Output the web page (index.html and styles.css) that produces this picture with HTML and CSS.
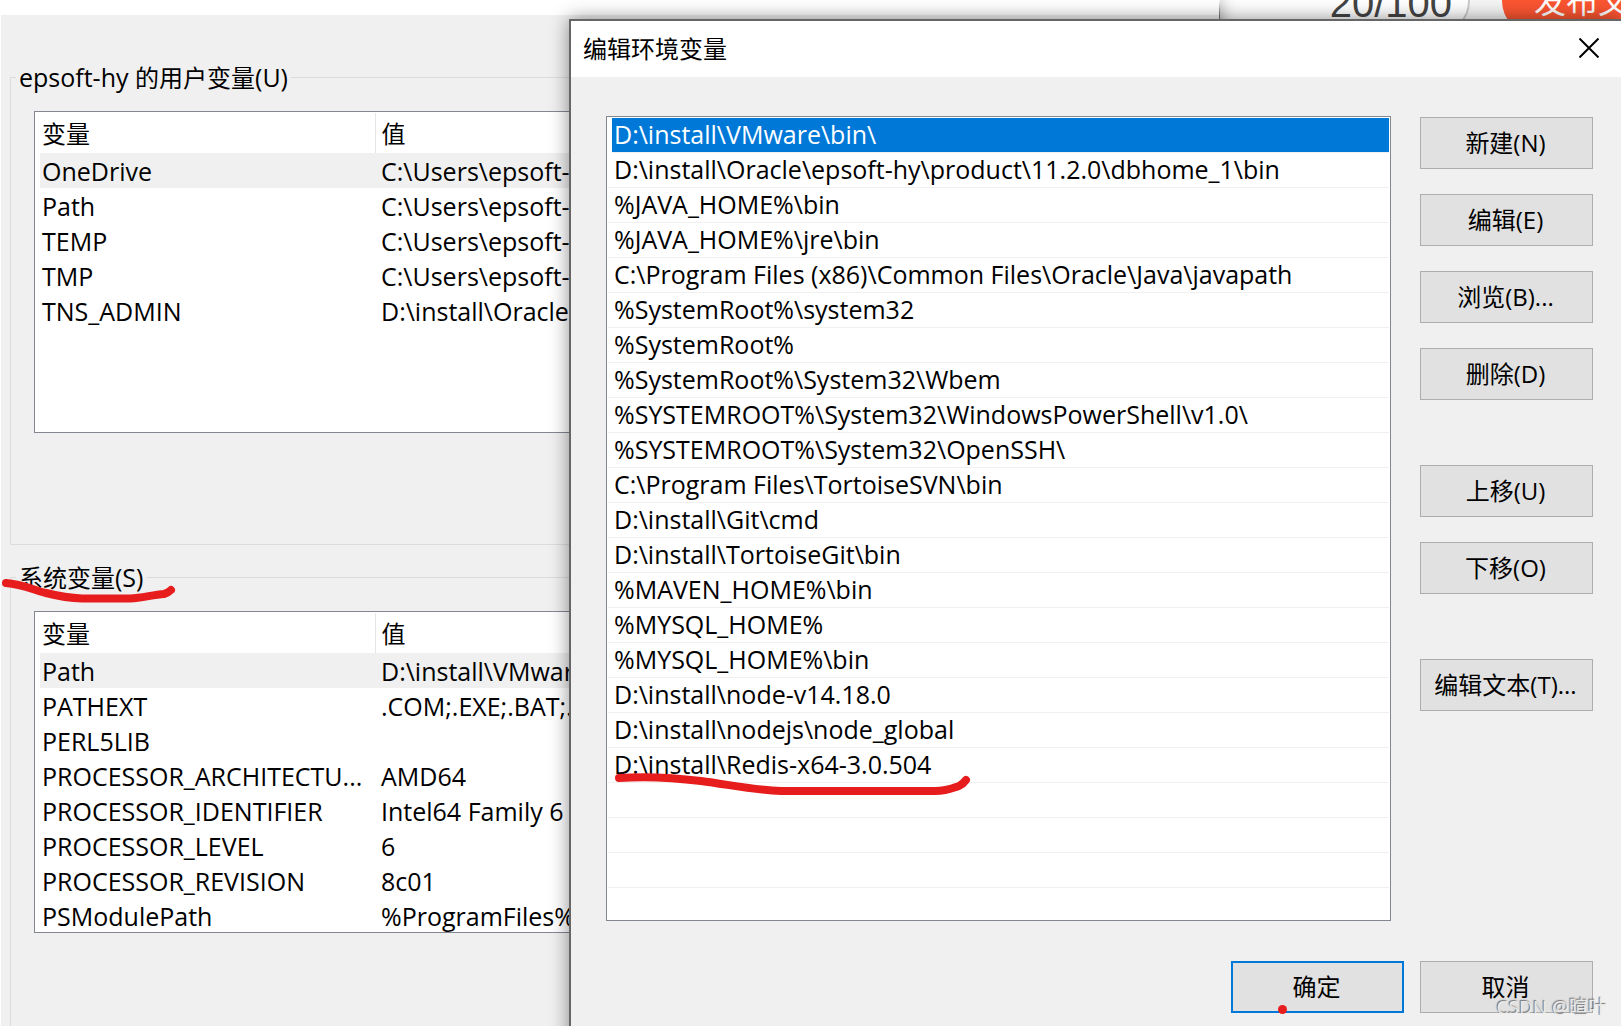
FILE: index.html
```html
<!DOCTYPE html>
<html lang="zh-CN">
<head>
<meta charset="utf-8">
<title>编辑环境变量</title>
<link rel="stylesheet" href="styles.css">
</head>
<body>
<div class="desktop">
  <header class="editor-bar">
    <span class="title-count">20/100</span>
    <button class="publish" type="button">发布文章</button>
  </header>

  <main class="window env-window">
    <fieldset class="group">
      <legend><span class="latin">epsoft-hy </span>的用户变量<span class="latin">(U)</span></legend>
      <div class="var-list">
        <table>
          <thead><tr><th class="name">变量</th><th>值</th></tr></thead>
          <tbody>
            <tr class="current"><td>OneDrive</td><td>C:\Users\epsoft-h</td></tr>
            <tr><td>Path</td><td>C:\Users\epsoft-h</td></tr>
            <tr><td>TEMP</td><td>C:\Users\epsoft-h</td></tr>
            <tr><td>TMP</td><td>C:\Users\epsoft-h</td></tr>
            <tr><td>TNS_ADMIN</td><td>D:\install\Oracle\</td></tr>
          </tbody>
        </table>
      </div>
    </fieldset>
    <fieldset class="group">
      <legend>系统变量<span class="latin">(S)</span></legend>
      <div class="var-list">
        <table>
          <thead><tr><th class="name">变量</th><th>值</th></tr></thead>
          <tbody>
            <tr class="current"><td>Path</td><td>D:\install\VMware</td></tr>
            <tr><td>PATHEXT</td><td>.COM;.EXE;.BAT;.C</td></tr>
            <tr><td>PERL5LIB</td><td></td></tr>
            <tr><td>PROCESSOR_ARCHITECTU...</td><td>AMD64</td></tr>
            <tr><td>PROCESSOR_IDENTIFIER</td><td>Intel64 Family 6 M</td></tr>
            <tr><td>PROCESSOR_LEVEL</td><td>6</td></tr>
            <tr><td>PROCESSOR_REVISION</td><td>8c01</td></tr>
            <tr><td>PSModulePath</td><td>%ProgramFiles%</td></tr>
          </tbody>
        </table>
      </div>
    </fieldset>
    <svg class="mark mark-group" width="180" height="34" viewBox="0 0 180 34" aria-hidden="true"><path d="M5 10C21 11 33 17 45 20C57 23 67 25 81 25.500H129C141 25 151 22 163 21Q167 20 170 17"/></svg>
  </main>

  <section class="window dialog" role="dialog" aria-labelledby="dialog-title">
    <header class="title-bar">
      <h1 id="dialog-title">编辑环境变量</h1>
      <button class="close" type="button" aria-label="关闭"><svg width="20" height="20" viewBox="0 0 20 20"><path d="M0.500 0.500L19.500 19.500M19.500 0.500L0.500 19.500"/></svg></button>
    </header>
    <div class="dialog-body">
      <ul class="path-list">
        <li class="selected">D:\install\VMware\bin\</li>
        <li>D:\install\Oracle\epsoft-hy\product\11.2.0\dbhome_1\bin</li>
        <li>%JAVA_HOME%\bin</li>
        <li>%JAVA_HOME%\jre\bin</li>
        <li>C:\Program Files (x86)\Common Files\Oracle\Java\javapath</li>
        <li>%SystemRoot%\system32</li>
        <li>%SystemRoot%</li>
        <li>%SystemRoot%\System32\Wbem</li>
        <li>%SYSTEMROOT%\System32\WindowsPowerShell\v1.0\</li>
        <li>%SYSTEMROOT%\System32\OpenSSH\</li>
        <li>C:\Program Files\TortoiseSVN\bin</li>
        <li>D:\install\Git\cmd</li>
        <li>D:\install\TortoiseGit\bin</li>
        <li>%MAVEN_HOME%\bin</li>
        <li>%MYSQL_HOME%</li>
        <li>%MYSQL_HOME%\bin</li>
        <li>D:\install\node-v14.18.0</li>
        <li>D:\install\nodejs\node_global</li>
        <li class="marked">D:\install\Redis-x64-3.0.504<svg class="mark mark-path" width="364" height="28" viewBox="0 0 364 28" aria-hidden="true"><path d="M6 8C35 6 64 8 88 11C118 15 140 20 168 21H322C334 21 340 18 346 16Q350 14 353 10"/></svg></li>
        <li></li>
        <li></li>
        <li></li>
      </ul>
      <div class="actions">
        <button type="button">新建(N)</button>
        <button type="button">编辑(E)</button>
        <button type="button">浏览(B)...</button>
        <button type="button">删除(D)</button>
        <button class="spaced" type="button">上移(U)</button>
        <button type="button">下移(O)</button>
        <button class="spaced" type="button">编辑文本(T)...</button>
      </div>
    </div>
    <footer class="dialog-footer">
      <button class="default" type="button">确定<span class="dot"></span></button>
      <button type="button">取消</button>
    </footer>
  </section>
  <span class="watermark">CSDN @暄叶</span>
</div>
</body>
</html>
```
FILE: styles.css
```css
* { box-sizing: border-box; }

body {
  margin: 0;
  background: #fff;
  color: #000;
  font: 24px/35px "Open Sans", "Noto Sans CJK SC", sans-serif;
}

button { font: inherit; color: inherit; }

.desktop {
  position: relative;
  height: 100vh;
  overflow: hidden;
}

/* Page behind the windows */
.editor-bar {
  display: flex;
  justify-content: flex-end;
  height: 34px;
  background: #f5f5f5;
}

.title-count {
  flex: 1;
  height: 66px;
  margin: -32px 32px 0 0;
  padding-right: 16px;
  border: 2px solid #ccc;
  border-radius: 33px;
  background: #fff;
  color: #444;
  font: 40px/66px "Liberation Sans", sans-serif;
  text-align: right;
}

.publish {
  width: 180px;
  height: 66px;
  margin: -32px -61px 0 0;
  padding: 0 0 0 32px;
  border: 0;
  border-radius: 33px;
  background: #fc5531;
  color: #fff;
  font-size: 32px;
  line-height: 66px;
  text-align: left;
  white-space: nowrap;
}

.window {
  position: absolute;
  background: #f0f0f0;
}

/* Environment variables window */
.env-window {
  top: 0;
  left: 0;
  width: 1220px;
  height: 100%;
  padding: 45px 16px 0 9px;
  border-top: 15px solid #fff;
  border-left: 1px solid #fff;
  border-right: 1px solid #777;
  box-shadow: 0 0 16px rgba(0, 0, 0, 0.4);
}

.group {
  height: 485px;
  margin: 0 0 15px;
  padding: 16px 23px 0;
  border: 1px solid #dcdcdc;
}

.group legend {
  margin-left: -18px;
  padding: 0 3px;
}

.latin { font-size: 25px; }

.var-list {
  height: 322px;
  padding: 1px 5px;
  border: 1px solid #828790;
  background: #fff;
}

.var-list table {
  width: 100%;
  border-collapse: collapse;
  table-layout: fixed;
}

.var-list th,
.var-list td {
  height: 35px;
  padding: 0 0 0 2px;
  font-size: 25px;
  font-weight: 400;
  line-height: 34px;
  text-align: left;
  white-space: nowrap;
}

.var-list th {
  height: 40px;
  padding-top: 1px;
  font-size: 24px;
}

.var-list .name {
  width: 335px;
  border-right: 1px solid #e5e5e5;
}

.var-list th + th,
.var-list td + td { padding-left: 6px; }

.var-list .current { background: #f0f0f0; }

/* Edit dialog */
.dialog {
  top: 19px;
  left: 569px;
  right: 0;
  bottom: -20px;
  border-top: 2px solid #666;
  border-left: 2px solid #666;
  box-shadow: 0 0 18px rgba(0, 0, 0, 0.45);
}

.title-bar {
  display: flex;
  align-items: center;
  justify-content: space-between;
  height: 56px;
  padding: 0 22px 2px 12px;
  background: #fff;
}

.title-bar h1 {
  margin: 0;
  font-size: 24px;
  font-weight: 400;
}

.close {
  display: flex;
  padding: 0;
  border: 0;
  background: none;
}

.close path {
  stroke: #000;
  stroke-width: 2;
}

.dialog-body {
  display: flex;
  gap: 29px;
  padding: 39px 28px 0 35px;
}

.path-list {
  flex: 1;
  height: 805px;
  margin: 0;
  padding: 1px;
  border: 1px solid #828790;
  background: #fff;
  font-size: 25px;
  line-height: 33px;
  list-style: none;
}

.path-list li {
  height: 35px;
  padding: 0 6px;
  border-bottom: 1px solid #f0f0f0;
  white-space: nowrap;
}

.path-list .selected {
  margin-left: 4px;
  padding-left: 2px;
  background: #0078d7;
  color: #fff;
}

.path-list .marked { position: relative; }

.actions {
  display: flex;
  flex-direction: column;
  gap: 25px;
  padding-top: 1px;
}

.actions button,
.dialog-footer button {
  width: 173px;
  height: 52px;
  padding: 0 2px 2px 0;
  border: 1px solid #adadad;
  background: #e1e1e1;
  white-space: nowrap;
}

.actions .spaced { margin-top: 40px; }

.dialog-footer {
  display: flex;
  justify-content: flex-end;
  gap: 16px;
  padding: 40px 28px 0;
}

.dialog-footer .default {
  position: relative;
  border: 2px solid #0078d7;
}

/* Red pen marks */
.mark {
  position: absolute;
  overflow: visible;
}

.mark path {
  fill: none;
  stroke: #e71d1d;
  stroke-width: 8;
  stroke-linecap: round;
  stroke-linejoin: round;
}

.mark-group {
  top: 558px;
  left: 0;
}

.mark-path {
  top: 22px;
  left: 5px;
}

.dot {
  position: absolute;
  bottom: -3px;
  left: 45px;
  width: 9px;
  height: 9px;
  border-radius: 50%;
  background: #e71d1d;
}

.watermark {
  position: absolute;
  right: 14px;
  bottom: 1px;
  color: rgba(240, 240, 240, 0.9);
  font-size: 19px;
  text-shadow: -1px -1px 1px rgba(0, 0, 0, 0.5);
}
```
